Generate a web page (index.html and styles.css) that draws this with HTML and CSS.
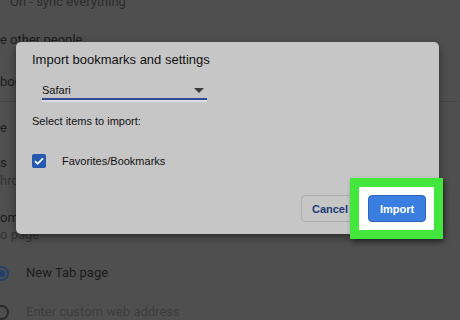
FILE: index.html
```html
<!DOCTYPE html>
<html lang="en">
<head>
    <meta charset="UTF-8">
    <meta name="viewport" content="width=device-width, initial-scale=1.0">
    <title>Import bookmarks and settings</title>
    <link rel="stylesheet" href="styles.css">
</head>
<body>

<!-- Settings page behind the dialog -->
<div class="page">
    <div class="bg-row first indent">On - sync everything</div>
    <div class="bg-row heading">e other people</div>
    <div class="bg-row heading">boo</div>
    <div class="divider"></div>
    <div class="bg-row r4">e</div>
    <div class="bg-row r5">s</div>
    <div class="bg-row r6 muted">hro</div>
    <div class="bg-row r7">om</div>
    <div class="bg-row r8 muted">o page</div>
    <div class="bg-row radio-row">
        <span class="radio checked"></span>
        <span>New Tab page</span>
    </div>
    <div class="bg-row radio-row second">
        <span class="radio"></span>
        <span class="faded">Enter custom web address</span>
    </div>
</div>

<!-- Import dialog -->
<div class="dialog">
    <h1 class="dialog-title">Import bookmarks and settings</h1>

    <div class="select">
        <span>Safari</span>
        <svg class="caret" width="10" height="5" viewBox="0 0 10 5"><path d="M0 0h10L5 5z" fill="#3a3a3a"/></svg>
    </div>

    <p class="hint">Select items to import:</p>

    <label class="check-row">
        <span class="checkbox">
            <svg width="14" height="14" viewBox="0 0 14 14"><path d="M3 7.2l2.6 2.6L11 4.4" fill="none" stroke="#fff" stroke-width="1.8"/></svg>
        </span>
        <span>Favorites/Bookmarks</span>
    </label>

    <div class="actions">
        <button class="btn btn-cancel">Cancel</button>
        <button class="btn btn-import">Import</button>
    </div>
</div>

<!-- Green highlight round the Import button -->
<div class="highlight"></div>
<button class="btn btn-import on-top">Import</button>

</body>
</html>
```

FILE: styles.css
```css
body {
    margin: 0;
    width: 460px;
    height: 320px;
    overflow: hidden;
    background-color: #4f4f4f;
    font-family: Roboto, "Liberation Sans", sans-serif;
    position: relative;
}
.page {
    font-size: 13px;
    color: #1c1c1c;
}
.bg-row {
    height: 16px;
    line-height: 16px;
    white-space: nowrap;
}
.bg-row.first {
    margin-top: -6px;
    color: #2c2c2c;
}
.indent {
    padding-left: 10px;
}
.heading {
    margin-top: 22px;
}
.heading + .heading {
    margin-top: 26px;
}
.divider {
    margin-top: 11px;
    height: 1px;
    background-color: #444;
}
.r4 { margin-top: 18px; }
.r5 { margin-top: 19px; }
.r6 { margin-top: 2px; }
.r7 { margin-top: 21px; }
.r8 { margin-top: 1px; }
.muted {
    color: #333;
}
.radio-row {
    display: flex;
    align-items: center;
    gap: 17px;
    margin-top: 22px;
    margin-left: -6px;
}
.radio-row.second {
    margin-top: 23px;
}
.radio {
    width: 11px;
    height: 11px;
    border: 2px solid #2a2a2a;
    border-radius: 50%;
    box-sizing: content-box;
}
.radio.checked {
    border-color: #22406e;
    background: radial-gradient(circle, #22406e 45%, transparent 50%);
}
.faded {
    color: #3d3d3d;
}

/* dialog */
.dialog {
    position: absolute;
    left: 16px;
    top: 42px;
    width: 423px;
    height: 192px;
    box-sizing: border-box;
    padding: 10px 13px 12px 16px;
    background-color: #c6c6c6;
    border-radius: 5px;
    box-shadow: 0 3px 8px rgba(0, 0, 0, 0.45);
    font-family: "Liberation Sans", Arial, sans-serif;
    color: #111;
    display: flex;
    flex-direction: column;
}
.dialog-title {
    margin: 0;
    font-size: 13px;
    font-weight: normal;
    line-height: 16px;
}
.select {
    margin: 12px 0 0 10px;
    width: 165px;
    padding-top: 2px;
    line-height: 16px;
    font-size: 11px;
    display: flex;
    justify-content: space-between;
    align-items: center;
    border-bottom: 2px solid #2c4a94;
    box-shadow: 0 2px 0 #dcdce6;
}
.caret {
    margin-right: 3px;
}
.hint {
    margin: 13px 0 0;
    font-size: 11px;
    line-height: 16px;
}
.check-row {
    margin-top: 24px;
    display: flex;
    align-items: center;
    gap: 16px;
    font-size: 11px;
    line-height: 16px;
}
.checkbox {
    width: 14px;
    height: 14px;
    border-radius: 2px;
    background-color: #2658ad;
    display: flex;
}
.actions {
    margin-top: auto;
    display: flex;
    justify-content: flex-end;
    gap: 9px;
}
.btn {
    width: 58px;
    height: 27px;
    border-radius: 4px;
    font-family: "Liberation Sans", Arial, sans-serif;
    font-size: 11px;
    font-weight: bold;
    cursor: pointer;
}
.btn-cancel {
    background-color: #c6c6c6;
    border: 1px solid #adadad;
    color: #1f3a78;
}
.btn-import {
    background-color: #3a7ee2;
    border: 1px solid #2f66bb;
    color: #fff;
}

/* callout drawn over the screenshot */
.highlight {
    position: absolute;
    left: 350px;
    top: 178px;
    width: 75px;
    height: 43px;
    border: 9px solid #42e63c;
    background-color: #fcfffb;
    box-shadow: 2px 3px 5px rgba(0, 0, 0, 0.45);
}
.on-top {
    position: absolute;
    left: 368px;
    top: 195px;
}
```
